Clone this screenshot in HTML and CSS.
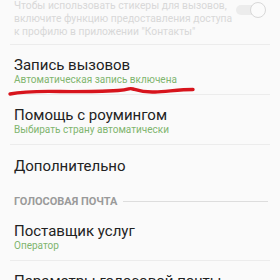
FILE: index.html
```html
<!DOCTYPE html>
<html lang="ru">
<head>
  <meta charset="UTF-8">
  <meta name="viewport" content="width=device-width, initial-scale=1.0">
  <title>Настройки вызовов</title>
  <link rel="stylesheet" href="styles.css">
</head>
<body>

  <div class="screen">
    <!-- отключенный пункт -->
    <div class="notice">
      <p>Чтобы использовать стикеры для вызовов, включите функцию предоставления доступа к профилю в приложении "Контакты"</p>
      <div class="switch"><span class="knob"></span></div>
    </div>

    <div class="item line">
      <h3>Запись вызовов</h3>
      <p>Автоматическая запись включена</p>
    </div>

    <div class="item line">
      <h3>Помощь с роумингом</h3>
      <p>Выбирать страну автоматически</p>
    </div>

    <div class="item single">
      <h3>Дополнительно</h3>
    </div>

    <div class="section">
      <span>Голосовая почта</span>
      <i></i>
    </div>

    <div class="item line">
      <h3>Поставщик услуг</h3>
      <p>Оператор</p>
    </div>

    <div class="item">
      <h3>Параметры голосовой почты</h3>
    </div>

    <!-- подчеркивание маркером -->
    <svg class="scribble" width="200" height="14" viewBox="0 0 200 14">
      <path d="M10 8 C 20 6, 35 5, 60 5.5 S 105 5, 118 4.5 S 128 1.5, 133 3 S 143 6.5, 155 6 S 180 3.5, 193 3.5" fill="none" stroke="#d7141c" stroke-width="3.4" stroke-linecap="round"/>
    </svg>
  </div>

</body>
</html>
```

FILE: styles.css
```css
* {
    font-family: Roboto, "Noto Sans", sans-serif;
    box-sizing: border-box;
}

body {
    margin: 0;
    background-color: #fafafa;
}

.screen {
    position: relative;
    width: 280px;
    height: 280px;
    overflow: hidden;
    padding: 0 10px;
}

.notice {
    display: flex;
    justify-content: space-between;
    align-items: flex-start;
    height: 45px;
    border-bottom: 1px solid #ececec;
}

.notice p {
    margin: -1px 0 0 4px;
    width: 222px;
    font-size: 10.3px;
    line-height: 13px;
    color: #d8d8d8;
}

.switch {
    position: relative;
    width: 28px;
    height: 10px;
    margin: 5px 6px 0 0;
    border-radius: 5px;
    background-color: #ececec;
}

.knob {
    position: absolute;
    right: -2px;
    top: -3px;
    width: 16px;
    height: 16px;
    border-radius: 50%;
    background-color: #fbfbfb;
    border: 1px solid #d8d8d8;
}

.item {
    padding: 12px 4px 7px;
}

.line {
    border-bottom: 1px solid #ececec;
}

.single {
    padding-top: 13px;
    padding-bottom: 12px;
}

.item h3 {
    margin: 0;
    font-size: 15px;
    font-weight: normal;
    line-height: 16px;
    color: #222;
}

.item p {
    margin: 0;
    font-size: 10px;
    line-height: 14px;
    color: #7fb56e;
}

.section {
    display: flex;
    align-items: center;
    gap: 6px;
    padding: 9px 2px 0 4px;
    height: 22px;
}

.section span {
    font-size: 11px;
    font-weight: bold;
    text-transform: uppercase;
    color: #9a9a9a;
    line-height: 12px;
}

.section i {
    flex: 1;
    height: 1px;
    background-color: #dddddd;
}

.section + .item {
    padding-top: 15px;
}

.scribble {
    position: absolute;
    left: 0;
    top: 86px;
}
```
